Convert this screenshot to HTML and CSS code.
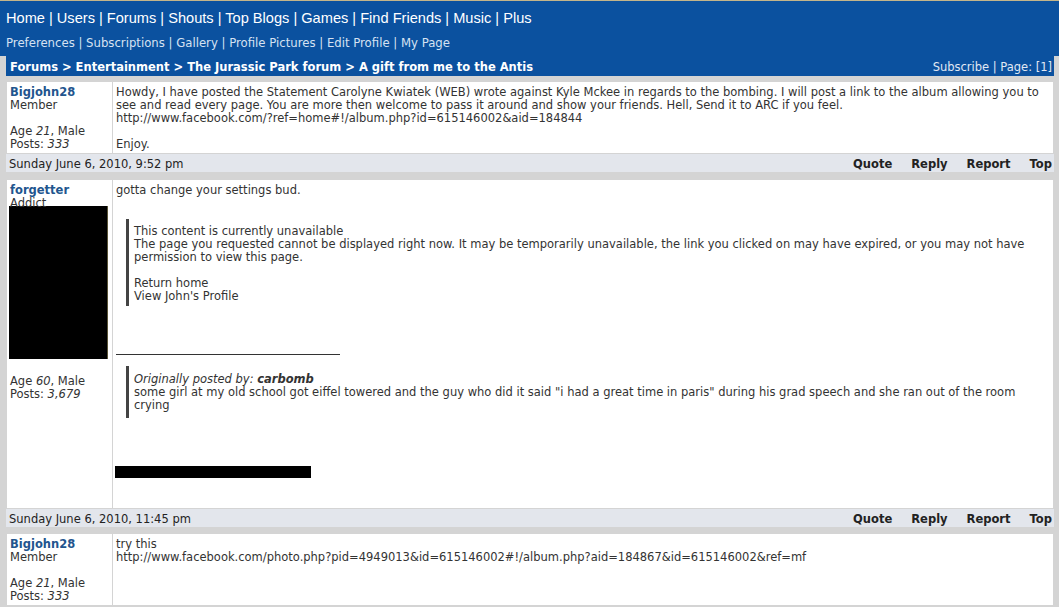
FILE: index.html
```html
<!DOCTYPE html>
<html>
<head>
<meta charset="utf-8">
<link rel="stylesheet" href="styles.css">
</head>
<body>
<div class="header">
  <div class="mainnav">Home | Users | Forums | Shouts | Top Blogs | Games | Find Friends | Music | Plus</div>
  <div class="subnav">Preferences | Subscriptions | Gallery | Profile Pictures | Edit Profile | My Page</div>
</div>
<div class="forum">
  <div class="crumbs">
    <span class="crumb-path">Forums &gt; Entertainment &gt; The Jurassic Park forum &gt; A gift from me to the Antis</span>
    <span class="crumb-right">Subscribe | Page: [1]</span>
  </div>

  <div class="post post-short">
    <div class="user">
      <div class="uname">Bigjohn28</div>
      <div>Member</div>
      <div class="blank"></div>
      <div>Age <i>21</i>, Male</div>
      <div>Posts: <i>333</i></div>
    </div>
    <div class="body">
      Howdy, I have posted the Statement Carolyne Kwiatek (WEB) wrote against Kyle Mckee in regards to the bombing. I will post a link to the album allowing you to see and read every page. You are more then welcome to pass it around and show your friends. Hell, Send it to ARC if you feel.<br>
      http://www.facebook.com/?ref=home#!/album.php?id=615146002&amp;aid=184844<br><br>
      Enjoy.
    </div>
  </div>
  <div class="datebar">
    <span>Sunday June 6, 2010, 9:52 pm</span>
    <span class="actions"><b>Quote</b><b>Reply</b><b>Report</b><b>Top</b></span>
  </div>

  <div class="post post-long">
    <div class="user">
      <div class="uname">forgetter</div>
      <div>Addict</div>
      <div class="avatar"></div>
      <div class="age">Age <i>60</i>, Male</div>
      <div>Posts: <i>3,679</i></div>
    </div>
    <div class="body">
      <div>gotta change your settings bud.</div>
      <div class="quote q1">
        This content is currently unavailable<br>
        The page you requested cannot be displayed right now. It may be temporarily unavailable, the link you clicked on may have expired, or you may not have permission to view this page.<br><br>
        Return home<br>
        View John's Profile
      </div>
      <div class="rule"></div>
      <div class="quote q2">
        <i>Originally posted by: <b>carbomb</b></i><br>
        some girl at my old school got eiffel towered and the guy who did it said "i had a great time in paris" during his grad speech and she ran out of the room crying
      </div>
      <div class="blackbar"></div>
    </div>
  </div>
  <div class="datebar">
    <span>Sunday June 6, 2010, 11:45 pm</span>
    <span class="actions"><b>Quote</b><b>Reply</b><b>Report</b><b>Top</b></span>
  </div>

  <div class="post post-short">
    <div class="user">
      <div class="uname">Bigjohn28</div>
      <div>Member</div>
      <div class="blank"></div>
      <div>Age <i>21</i>, Male</div>
      <div>Posts: <i>333</i></div>
    </div>
    <div class="body">
      try this<br>
      http://www.facebook.com/photo.php?pid=4949013&amp;id=615146002#!/album.php?aid=184867&amp;id=615146002&amp;ref=mf
    </div>
  </div>
</div>
</body>
</html>
```

FILE: styles.css
```css
html, body {
  margin: 0;
  padding: 0;
}
body {
  background: #d4d4d4;
  font-family: "DejaVu Sans", Verdana, sans-serif;
  font-size: 11.5px;
  line-height: 13px;
  color: #333;
  overflow: hidden;
}
.header {
  background: #0b519f;
  border-top: 1px solid #c4b58a;
  box-sizing: border-box;
  height: 56px;
  padding-left: 6px;
}
.mainnav {
  font-family: "Liberation Sans", Arial, sans-serif;
  font-size: 14.6px;
  line-height: 19px;
  color: #fff;
  padding-top: 8px;
}
.subnav {
  font-size: 11.7px;
  line-height: 14px;
  color: #d6e2f2;
  margin-top: 8px;
}
.forum {
  margin: 0 5px 0 6px;
}
.crumbs {
  background: #0b519f;
  height: 20px;
  box-sizing: border-box;
  padding: 2px 2px 0 4px;
  display: flex;
  justify-content: space-between;
  align-items: center;
  color: #fff;
  margin-bottom: 6px;
}
.crumb-path {
  font-weight: bold;
}
.crumb-right {
  color: #e0e8f4;
}
.post {
  display: grid;
  grid-template-columns: 105px 1fr;
  gap: 1px;
  padding: 0 1px;
}
.user, .body {
  background: #fff;
  padding: 4px 3px 2px 3px;
}
.body {
  padding-right: 10px;
}
.uname {
  font-weight: bold;
  color: #22558e;
}
.blank {
  height: 13px;
}
.avatar {
  width: 99px;
  height: 153px;
  background: #000;
  margin-top: -4px;
  margin-left: -1px;
  border-right: 1px solid #5a5436;
  box-sizing: border-box;
}
.age {
  margin-top: 16px;
}
.quote {
  border-left: 3px solid #444;
  margin-left: 10px;
  padding-left: 5px;
}
.q1 {
  margin-top: 22px;
  padding-top: 6px;
  padding-bottom: 3px;
}
.rule {
  width: 224px;
  height: 1px;
  background: #333;
  margin-top: 48px;
}
.q2 {
  margin-top: 11px;
  padding-top: 7px;
  padding-bottom: 6px;
}
.blackbar {
  width: 196px;
  height: 12px;
  background: #000;
  margin-top: 48px;
  margin-left: -1px;
  margin-bottom: 28px;
}
.datebar {
  background: #e3e6ec;
  height: 18px;
  box-sizing: border-box;
  padding: 2px 2px 0 3px;
  display: flex;
  justify-content: space-between;
  align-items: center;
  margin: 1px 0 8px 0;
  color: #222;
}
.post-long + .datebar {
  margin-bottom: 7px;
}
.actions b {
  color: #222;
  margin-left: 19px;
}
```
